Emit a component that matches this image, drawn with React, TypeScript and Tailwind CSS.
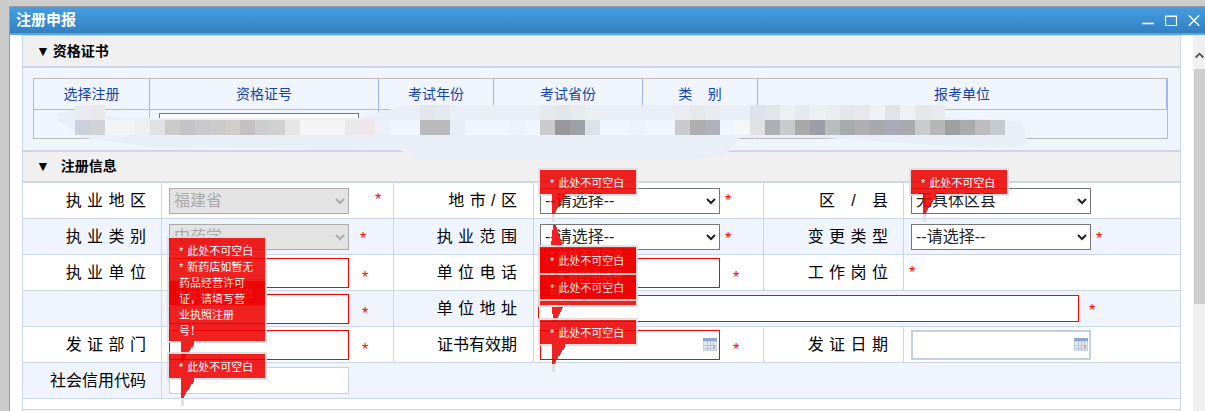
import React from "react";

const mosaic: [number, string][] = [
  [75,"#ccd0da"],[90,"#d2d3d6"],[105,"#f0f3f8"],[120,"#f0f3f8"],[135,"#eceff5"],[150,"#e0e1e4"],[165,"#cdcbc9"],[180,"#c4c4c6"],[195,"#c9c9ca"],[210,"#cbcbcc"],[225,"#d0cec9"],[240,"#c2c0c0"],[255,"#cccecd"],[270,"#d0d0ce"],[285,"#e6e6e5"],[300,"#f4f4f4"],[315,"#f4f4f4"],[330,"#f4f4f4"],[345,"#e9e9e8"],[360,"#f0e6ea"],[375,"#edf0f7"],[390,"#f0f5fd"],[405,"#f0f5fd"],[420,"#b9babd"],[435,"#b9babd"],[450,"#e6edf6"],[465,"#f0f5fd"],[480,"#f0f5fd"],[495,"#f0f5fd"],[510,"#edf2fa"],[525,"#f0f5fd"],[540,"#cbcbcd"],[555,"#98989c"],[570,"#9ea1a7"],[585,"#dce2ea"],[600,"#f0f5fd"],[615,"#f0f5fd"],[630,"#edf2fa"],[645,"#f0f5fd"],[660,"#f0f5fd"],[675,"#c8cacd"],[690,"#aeaeae"],[705,"#afb2ba"],[720,"#f0f5fd"],[735,"#f3f6fb"],[750,"#dfe1e3"],[765,"#adb0b3"],[780,"#c8cbce"],[795,"#a9a9a9"],[810,"#9b9ea6"],[825,"#b9bcbd"],[840,"#a8abae"],[855,"#b0b0b2"],[870,"#a6a9ad"],[885,"#a8abb5"],[900,"#a8aaad"],[915,"#c9cccf"],[930,"#b7b7b5"],[945,"#9ea1a4"],[960,"#a9acae"],[975,"#bcbdbf"],[990,"#c5cad0"],
];
const upper: [number, string][] = [
  [75,"#e9ebef"],[90,"#e6e8ea"],[540,"#e7e9ec"],[555,"#e3e6e8"],[570,"#e8ebee"],[585,"#ebeef3"],[675,"#e9ecf0"],[690,"#e6e9ec"],[705,"#e8ebef"],[750,"#dfe2ea"],[765,"#e2e5e9"],[420,"#e2e5ec"],[435,"#e5e8ee"],[480,"#eaeef5"],[780,"#ecf0f2"],[795,"#e6e9f0"],[810,"#ecf0f2"],[825,"#e9ecf0"],[840,"#e5e6e9"],[855,"#e6e8ed"],[870,"#eef1f6"],[885,"#e1e3e8"],[900,"#eef1f5"],[915,"#e6e7ea"],[930,"#e8eaee"],
];

function Smear() {
  return (
    <svg className="absolute left-0 top-0 pointer-events-none" width="1205" height="170" shapeRendering="crispEdges">
      <polygon points="57,113 75,110 95,113 120,118 360,118 395,108 402,105 760,105 850,110 960,118 1022,121 1028,145 1000,148 930,145 810,137 740,137 730,150 720,156 690,160 420,160 400,150 150,147 85,138 57,120" fill="#eaeff7" shapeRendering="geometricPrecision" />
      {upper.map(([x, c]) => <rect key={"u" + x} x={x} y={105} width={15} height={15} fill={c} />)}
      {mosaic.map(([x, c]) => <rect key={x} x={x} y={120} width={15} height={15} fill={c} />)}
    </svg>
  );
}

const tailRows = [13, 13, 12, 10, 9, 8, 6, 5, 4, 3];
function Tail() {
  return (
    <svg className="absolute left-[12px] top-full" width="15" height="28" shapeRendering="crispEdges">
      <rect x="0" y="0" width="3" height="28" fill="#dddddd" />
      {tailRows.map((w, i) => <rect key={i} x="0" y={i * 2} width={w} height="2" fill="#ee0101" />)}
    </svg>
  );
}

function Bubble({ className, lines, tail = true }: { className: string; lines: string[]; tail?: boolean }) {
  return (
    <div className={"absolute w-[100px] border-2 border-[#dddddd] bg-[#ee0101] opacity-[0.87] text-white text-[11px] leading-[16px] [word-spacing:1px] pl-[10px] pr-[8px] pt-[5px] pb-[3px] " + className}>
      {lines.map((l, i) => <div key={i}>{l}</div>)}
      {tail && <Tail />}
    </div>
  );
}

function Star({ className = "" }: { className?: string }) {
  return <span className={"text-[#ff0000] text-[16px] leading-[20px] " + className}>*</span>;
}

function Calendar({ className }: { className: string }) {
  return (
    <svg className={"absolute " + className} width="14" height="13" viewBox="0 0 14 13" shapeRendering="crispEdges">
      <rect x="0" y="0" width="14" height="13" fill="#c3cfe2" />
      <rect x="0" y="0" width="14" height="3" fill="#8fa6cf" />
      <rect x="1" y="4" width="12" height="8" fill="#e7ecf5" />
      <path d="M4 4v8M7 4v8M10 4v8M1 7h12M1 10h12" stroke="#b5c2d8" strokeWidth="1" />
      <rect x="10" y="7" width="2" height="3" fill="#e8a08c" />
    </svg>
  );
}

function Label({ children, className = "" }: { children: React.ReactNode; className?: string }) {
  return <div className={"flex items-center justify-end border-r border-[#c9d6e8] text-[16px] text-black [word-spacing:1px] " + className}>{children}</div>;
}
function Field({ children, className = "" }: { children: React.ReactNode; className?: string }) {
  return <div className={"flex items-center border-r border-[#c9d6e8] " + className}>{children}</div>;
}
function Sel({ value, disabled }: { value: string; disabled?: boolean }) {
  return (
    <select
      disabled={disabled}
      defaultValue={value}
      className={disabled ? "w-[180px] h-[26px] border border-[#aaaaaa] bg-[#e3e3e3] text-[#aaaaaa] text-[16px]" : "w-[180px] h-[26px] border border-[#767676] bg-white text-[#222] text-[16px]"}
    >
      <option>{value}</option>
    </select>
  );
}
function RedInput({ className = "w-[180px] h-[30px]" }: { className?: string }) {
  return <div className={"border border-[#ff0000] bg-white " + className} />;
}

const hdr = "flex items-center justify-center border-r border-[#9db4e6] pt-[1px] text-[14px] text-[#1144aa]";
const bodyCell = "border-r border-[#bbbbbb]";

export default function App() {
  return (
    <div className="relative h-[411px] w-[1205px] overflow-hidden bg-[#cccccc] pt-[6px] pl-[9px] font-['Liberation_Sans','Noto_Sans_CJK_SC',sans-serif]">
      <div className="h-[405px] border-l border-t border-[#999999] bg-white">
        <div className="flex h-[28px] items-center justify-between border-b-2 border-[#5aa6e4] bg-gradient-to-b from-[#449ee1] to-[#3380c1] pl-[6px] pr-[5px]">
          <span className="text-[15px] font-bold text-white">注册申报</span>
          <div className="flex items-center gap-[11px]">
            <svg width="12" height="11" viewBox="0 0 12 11"><path d="M0 8.5h12" stroke="#fff" strokeWidth="1.6" /></svg>
            <svg width="12" height="11" viewBox="0 0 12 11"><path d="M.5 1.5h11v9H.5zM0 1h12" fill="none" stroke="#fff" strokeWidth="1.2" /></svg>
            <svg width="12" height="11" viewBox="0 0 12 11"><path d="M.8 .3L11.2 10.7M11.2 .3L.8 10.7" stroke="#fff" strokeWidth="1.5" /></svg>
          </div>
        </div>
        <div className="flex">
          <div className="ml-[12px] w-[1159px] border-x border-[#c9d6e8]">
            {/* 资格证书 */}
            <div className="flex h-[31px] items-center gap-[3px] border-t border-[#c9d6e8] bg-[#f0f0f0] pl-[13px] pt-[1px] text-[14px] font-bold text-black">
              <span className="text-[14px]">▼</span><span>资格证书</span>
            </div>
            <div className="border-t-2 border-[#cdd6e6] bg-[#f0f5fd] px-[10px] pt-[10px] pb-[11px]">
              <div className="w-[1135px] border border-[#bbbbbb]">
                <div className="grid h-[31px] grid-cols-[116px_229px_115px_149px_115px_409px] border-b border-[#bbbbbb]">
                  <div className={hdr}>选择注册</div>
                  <div className={hdr}>资格证号</div>
                  <div className={hdr}>考试年份</div>
                  <div className={hdr}>考试省份</div>
                  <div className={hdr}>类&nbsp;&nbsp;&nbsp;&nbsp;别</div>
                  <div className={hdr}>报考单位</div>
                </div>
                <div className="grid h-[28px] grid-cols-[116px_229px_115px_149px_115px_409px]">
                  <div className={bodyCell} />
                  <div className={bodyCell + " pl-[9px] pt-[3px]"}><div className="h-[24px] w-[200px] border border-[#767676] bg-white" /></div>
                  <div className={bodyCell} />
                  <div className={bodyCell} />
                  <div className={bodyCell} />
                  <div />
                </div>
              </div>
            </div>
            {/* 注册信息 */}
            <div className="flex h-[33px] items-center border-y-2 border-[#cdd6e6] bg-[#f0f0f0] pl-[13px] text-[14px] font-bold text-black">
              <span className="text-[14px]">▼</span><span className="ml-[11px]">注册信息</span>
            </div>
            <div className="grid grid-cols-[139px_232px_140px_230px_140px_276px] auto-rows-[36px]">
              <Label className="pr-[15px] border-b">执 业 地 区</Label>
              <Field className="pl-[7px] border-b"><Sel value="福建省" disabled /><Star className="ml-[26px] mb-[2px]" /></Field>
              <Label className="pr-[16px] border-b">地 市 / 区</Label>
              <Field className="pl-[6px] border-b"><Sel value="--请选择--" /><Star className="ml-[5px]" /></Field>
              <Label className="pr-[15px] border-b">区&nbsp;&nbsp;&nbsp;/&nbsp;&nbsp;&nbsp;县</Label>
              <Field className="pl-[7px] border-b border-r-0"><Sel value="无具体区县" /></Field>

              <Label className="pr-[15px] border-b bg-[#f0f5fd]">执 业 类 别</Label>
              <Field className="pl-[7px] border-b bg-[#f0f5fd]"><Sel value="中药学" disabled /><Star className="ml-[11px] mt-[4px]" /></Field>
              <Label className="pr-[16px] border-b bg-[#f0f5fd]">执 业 范 围</Label>
              <Field className="pl-[6px] border-b bg-[#f0f5fd]"><Sel value="--请选择--" /><Star className="ml-[5px] mt-[4px]" /></Field>
              <Label className="pr-[15px] border-b bg-[#f0f5fd]">变 更 类 型</Label>
              <Field className="pl-[7px] border-b border-r-0 bg-[#f0f5fd]"><Sel value="--请选择--" /><Star className="ml-[5px] mt-[4px]" /></Field>

              <Label className="pr-[15px] border-b">执 业 单 位</Label>
              <Field className="pl-[7px] border-b"><RedInput /><Star className="ml-[13px] mt-[10px]" /></Field>
              <Label className="pr-[16px] border-b">单 位 电 话</Label>
              <Field className="pl-[6px] border-b"><RedInput /><Star className="ml-[13px] mt-[10px]" /></Field>
              <Label className="pr-[15px] border-b">工 作 岗 位</Label>
              <Field className="pl-[5px] border-b border-r-0"><Star /></Field>

              <Label className="pr-[15px] border-b bg-[#f0f5fd]"> </Label>
              <Field className="pl-[7px] border-b bg-[#f0f5fd]"><RedInput /><Star className="ml-[13px] mt-[10px]" /></Field>
              <Label className="pr-[16px] border-b bg-[#f0f5fd]">单 位 地 址</Label>
              <Field className="col-span-3 pl-[4px] border-b border-r-0 bg-[#f0f5fd]"><RedInput className="w-[541px] h-[27px]" /><Star className="ml-[10px] mt-[4px]" /></Field>

              <Label className="pr-[15px] border-b">发 证 部 门</Label>
              <Field className="pl-[7px] border-b"><RedInput /><Star className="ml-[13px] mt-[10px]" /></Field>
              <Label className="pr-[16px] border-b">证书有效期</Label>
              <Field className="pl-[6px] border-b"><div className="relative"><RedInput /><Calendar className="right-[3px] top-[8px]" /></div><Star className="ml-[13px] mt-[10px]" /></Field>
              <Label className="pr-[15px] border-b">发 证 日 期</Label>
              <Field className="pl-[7px] border-b border-r-0"><div className="relative h-[30px] w-[180px] border-2 border-[#c4d0dc] bg-white"><Calendar className="right-[1px] top-[6px]" /></div></Field>

              <Label className="pr-[15px] border-b bg-[#f0f5fd]">社会信用代码</Label>
              <div className="col-span-5 flex items-center border-b border-[#c9d6e8] bg-[#f0f5fd] pl-[7px]"><div className="h-[27px] w-[180px] border border-[#c4d0dc] bg-white" /></div>
            </div>
            <div className="mt-[10px] h-[10px] border-t border-[#c9d6e8] bg-[#f0f0f0]" />
          </div>
          {/* scrollbar */}
          <div className="ml-[12px] h-[376px] w-[12px] bg-[#f0f0f0] pt-[16px]">
            <svg className="ml-[2px]" width="9" height="9" viewBox="0 0 9 9"><path d="M.7 6.5L4.5 2.7 8.3 6.5" fill="none" stroke="#505050" strokeWidth="1.8" /></svg>
            <div className="ml-px mt-[9px] h-[235px] w-[11px] bg-[#cdcdcd]" />
          </div>
        </div>
      </div>

      <Smear />

      <Bubble className="left-[909px] top-[168px]" lines={["* 此处不可空白"]} />
      <Bubble className="left-[538px] top-[168px]" lines={["* 此处不可空白"]} />

      <svg className="absolute left-[551px] top-[225px]" width="13" height="21" shapeRendering="crispEdges">
        <polygon points="2,0 5,0 12,21 0,21" fill="#f22022" />
      </svg>
      <div className="absolute left-[538px] top-[245px] h-[62px] w-[100px] border-2 border-[#dddddd] bg-[#ee0101] opacity-[0.87] pl-[10px] text-[11px] leading-[15px] text-white">
        <div className="mt-[1px]">* 此处不可空白</div>
        <div className="mt-[6px]">* 无效的电话号</div>
        <div>码</div>
      </div>
      <svg className="absolute left-[552px] top-[307px]" width="13" height="14" shapeRendering="crispEdges">
        <polygon points="0,0 11,0 4,14 1,14" fill="#f22022" />
      </svg>
      <Bubble className="left-[538px] top-[248px] h-[26px] !border-y-0" lines={["* 此处不可空白"]} tail={false} />
      <Bubble className="left-[538px] top-[273px] h-[28px]" lines={["* 此处不可空白"]} tail={false} />
      <Bubble className="left-[538px] top-[318px] h-[28px]" lines={["* 此处不可空白"]} />

      <Bubble className="left-[167px] top-[279px] h-[28px]" lines={["* 此处不可空白"]} tail={false} />
      <Bubble className="left-[167px] top-[236px] h-[107px]" lines={["* 此处不可空白", "* 新药店如暂无", "药品经营许可", "证，请填写营", "业执照注册", "号！"]} />
      <Bubble className="left-[167px] top-[352px] h-[28px]" lines={["* 此处不可空白"]} />
    </div>
  );
}
